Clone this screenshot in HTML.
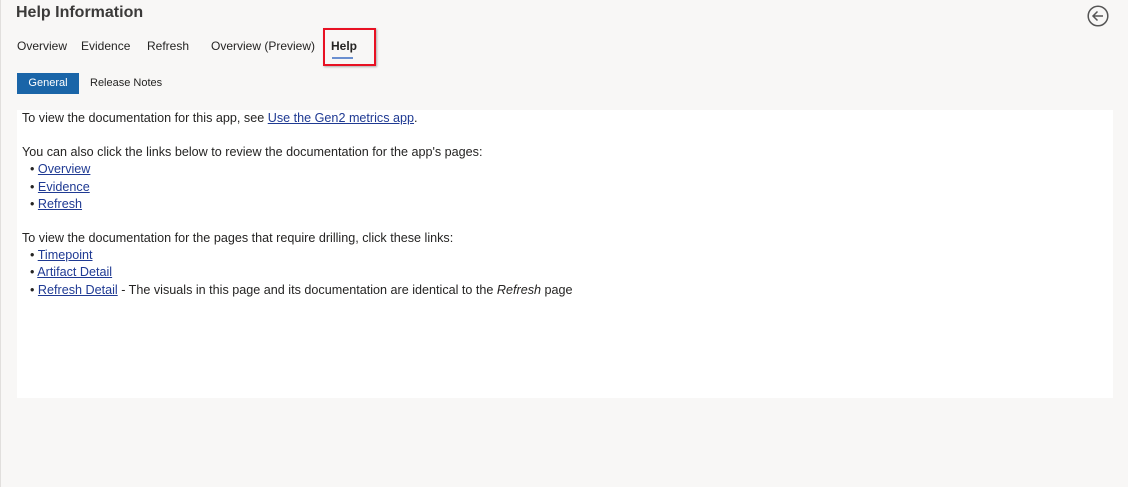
<!DOCTYPE html>
<html><head><style>
body{margin:0;width:1128px;height:487px;background:#f8f7f6;font-family:"Liberation Sans",sans-serif;color:#252423;position:relative;overflow:hidden}
.a{position:absolute;white-space:nowrap}
.t{font-size:12px;top:39px}
a{color:#1f3a93;text-decoration:underline}
.p{position:absolute;left:17px;top:110px;width:1096px;height:288px;background:#fff}
.l{position:absolute;left:5px;font-size:12.6px;white-space:nowrap}
</style></head><body>
<div class="a" style="left:0;top:0;width:1px;height:487px;background:#e1dfdd"></div>
<div class="a" style="left:16px;top:4px;font-size:16px;font-weight:bold;color:#3b3a39">Help Information</div>
<svg class="a" style="left:1087px;top:5px" width="22" height="22" viewBox="0 0 22 22"><circle cx="11" cy="11" r="9.8" fill="none" stroke="#555" stroke-width="1.5"/><path d="M16 11H6M10.5 6.5L6 11l4.5 4.5" fill="none" stroke="#555" stroke-width="1.5"/></svg>
<div class="a t" style="left:17px">Overview</div>
<div class="a t" style="left:81px">Evidence</div>
<div class="a t" style="left:147px">Refresh</div>
<div class="a t" style="left:211px">Overview (Preview)</div>
<div class="a t" style="left:331px;font-weight:bold">Help</div>
<div class="a" style="left:332px;top:57px;width:21px;height:2px;background:#6a8fd0"></div>
<div class="a" style="left:323px;top:28px;width:49px;height:34px;border:2px solid #e81123;box-shadow:1px 1px 2px rgba(0,0,0,.3)"></div>
<div class="a" style="left:17px;top:73px;width:62px;height:21px;background:#1a65a8;color:#fff;font-size:11px;line-height:21px;text-align:center">General</div>
<div class="a" style="left:90px;top:77px;font-size:11px">Release Notes</div>
<div class="p">
<div class="l" style="top:1px">To view the documentation for this app, see <a>Use the Gen2 metrics app</a>.</div>
<div class="l" style="top:35px">You can also click the links below to review the documentation for the app's pages:</div>
<div class="l" style="top:52px;left:13px">• <a>Overview</a></div>
<div class="l" style="top:70px;left:13px">• <a>Evidence</a></div>
<div class="l" style="top:87px;left:13px">• <a>Refresh</a></div>
<div class="l" style="top:121px">To view the documentation for the pages that require drilling, click these links:</div>
<div class="l" style="top:138px;left:13px">• <a>Timepoint</a></div>
<div class="l" style="top:155px;left:13px">• <a>Artifact Detail</a></div>
<div class="l" style="top:173px;left:13px">• <a>Refresh Detail</a> - The visuals in this page and its documentation are identical to the <i>Refresh</i> page</div>
</div>
</body></html>
